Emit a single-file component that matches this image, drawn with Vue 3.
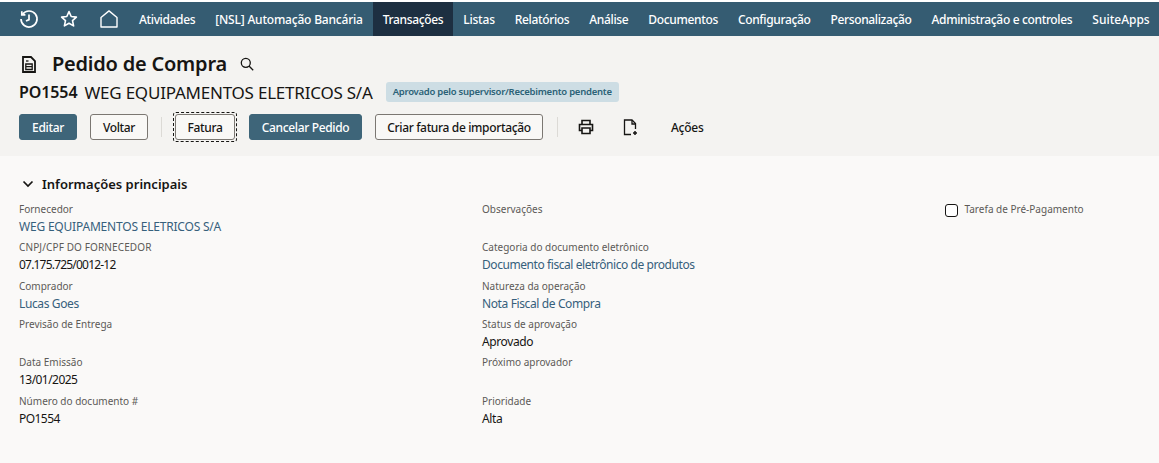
<script setup>
const nav = [
  { t: 'Atividades' }, { t: '[NSL] Automação Bancária', kind: 'loose' }, { t: 'Transações', kind: 'active' },
  { t: 'Listas', kind: 'loose' }, { t: 'Relatórios' }, { t: 'Análise' }, { t: 'Documentos' }, { t: 'Configuração' },
  { t: 'Personalização' }, { t: 'Administração e controles' }, { t: 'SuiteApps', kind: 'open' }
]
const left = [
  { l: 'Fornecedor', v: 'WEG EQUIPAMENTOS ELETRICOS S/A', kind: 'link caps' },
  { l: 'CNPJ/CPF DO FORNECEDOR', v: '07.175.725/0012-12', kind: 'num', lk: 'caps-label' },
  { l: 'Comprador', v: 'Lucas Goes', kind: 'link' },
  { l: 'Previsão de Entrega', v: '' },
  { l: 'Data Emissão', v: '13/01/2025', kind: 'num2' },
  { l: 'Número do documento #', v: 'PO1554', kind: 'num2' }
]
const mid = [
  { l: 'Observações', v: '' },
  { l: 'Categoria do documento eletrônico', v: 'Documento fiscal eletrônico de produtos', kind: 'link tight' },
  { l: 'Natureza da operação', v: 'Nota Fiscal de Compra', kind: 'link' },
  { l: 'Status de aprovação', v: 'Aprovado' },
  { l: 'Próximo aprovador', v: '' },
  { l: 'Prioridade', v: 'Alta' }
]
</script>

<template>
  <div class="page">
    <nav class="nav">
      <div class="nav-icons">
        <svg width="20" height="20" viewBox="0 0 20 20" fill="none" stroke="#fff" stroke-width="1.7"><path d="M3.6 5.2A8 8 0 1 1 2 10" /><path d="M2.800 2.200v3.600h3.600" /><path d="M10 5.500V10.600l-3 1.400" /></svg>
        <svg class="star" width="18" height="18" viewBox="0 0 18 18" fill="none" stroke="#fff" stroke-width="1.600" stroke-linejoin="round"><path d="M9 1.600l2.200 4.900 5.200.6-3.900 3.500 1.100 5.300L9 13.200l-4.600 2.700 1.100-5.300L1.600 7.100l5.200-.6z" /></svg>
        <svg class="home" width="18" height="18" viewBox="0 0 18 18" fill="none" stroke="#fff" stroke-width="1.400" stroke-linejoin="round"><path d="M1 7.500L9 .9l8 6.600V17H1z" /></svg>
      </div>
      <a v-for="n in nav" :key="n.t" class="nav-item" :class="n.kind">{{ n.t }}</a>
    </nav>

    <header class="head">
      <div class="title-row">
        <svg class="doc" width="14" height="17" viewBox="0 0 14 17" fill="none" stroke="#161513" stroke-width="1.800"><path d="M1 1h8l4 4v11H1z" /><path d="M3.800 8h6.400v5.500H3.800zM3.800 10.700h6.400" stroke-width="1.300" /><path d="M4 5h2.500" stroke-width="1.300" /></svg>
        <h1>Pedido de Compra</h1>
        <svg class="search" width="14" height="14" viewBox="0 0 14 14" fill="none" stroke="#161513" stroke-width="1.300"><circle cx="5.800" cy="5.800" r="4.500" /><path d="M9 9l4.200 4.200" /></svg>
      </div>
      <div class="sub-row">
        <strong>PO1554</strong>
        <span class="vendor">WEG EQUIPAMENTOS ELETRICOS S/A</span>
        <span class="badge">Aprovado pelo supervisor/Recebimento pendente</span>
      </div>
      <div class="actions">
        <button class="btn primary w-edit">Editar</button>
        <button class="btn w-back">Voltar</button>
        <span class="sep"></span>
        <span class="focus"><button class="btn w-inv">Fatura</button></span>
        <button class="btn primary w-cancel">Cancelar Pedido</button>
        <button class="btn w-import">Criar fatura de importação</button>
        <span class="sep sep2"></span>
        <svg class="print" width="16" height="16" viewBox="0 0 16 16" fill="none" stroke="#161513" stroke-width="1.600"><path d="M4 5V1.500h8V5" /><path d="M4 11.500H1.500V5.500h13v6H12" /><path d="M4 9h8v5.500H4z" /></svg>
        <svg class="newdoc" width="16" height="17" viewBox="0 0 16 17" fill="none" stroke="#161513" stroke-width="1.300"><path d="M8 15.500H1.500V1h7.500l3.500 3.500V10" /><path d="M9 1v4h3.500" /><path d="M12 12v4M10 14h4" stroke-width="1.500" /></svg>
        <span class="acoes">Ações</span>
      </div>
    </header>

    <main class="body">
      <div class="section">
        <svg width="12" height="8" viewBox="0 0 12 8" fill="none" stroke="#161513" stroke-width="1.700"><path d="M1.500 1.500L6 6l4.500-4.500" /></svg>
        <span>Informações principais</span>
      </div>
      <div class="grid">
        <div class="col col-a">
          <div v-for="f in left" :key="f.l" class="field">
            <div class="label" :class="f.lk">{{ f.l }}</div>
            <div class="value" :class="f.kind">{{ f.v }}</div>
          </div>
        </div>
        <div class="col col-b">
          <div v-for="f in mid" :key="f.l" class="field">
            <div class="label">{{ f.l }}</div>
            <div class="value" :class="f.kind">{{ f.v }}</div>
          </div>
        </div>
        <div class="col-c">
          <span class="check"></span>
          <span class="label">Tarefa de Pré-Pagamento</span>
        </div>
      </div>
    </main>
  </div>
</template>

<style>
html, body { margin: 0; background: #fff; }
</style>

<style scoped>
.page {
  width: 1159px;
  height: 463px;
  padding-top: 2px;
  box-sizing: border-box;
  overflow: hidden;
  display: flex;
  flex-direction: column;
  font-family: "Noto Sans", "Open Sans", sans-serif;
  color: #161513;
  background: #fff;
}
.nav {
  height: 34px;
  flex: none;
  display: flex;
  align-items: stretch;
  background: #355c72;
  padding-left: 19px;
}
.nav-icons {
  flex: none;
  display: flex;
  align-items: center;
  gap: 22px;
  width: 110px;
}
.star { margin-left: -1px; }
.nav-item {
  flex: none;
  color: #fff;
  font-size: 12px;
  font-weight: 500;
  letter-spacing: -0.35px;
  display: flex;
  align-items: center;
  padding: 0 10px;
  white-space: nowrap;
}
.nav-item.loose { letter-spacing: -0.2px; }
.nav-item.open { letter-spacing: 0; }
.nav-item.active { background: #1d2f41; }
.head {
  flex: none;
  height: 120px;
  background: #f4f3f1;
  box-sizing: border-box;
  padding: 16px 0 0 19px;
}
.title-row { display: flex; align-items: center; height: 24px; }
.doc { margin-left: 3px; }
.title-row h1 { margin: 0 0 0 16px; font-size: 20px; font-weight: 600; line-height: 24px; letter-spacing: -0.22px; }
.search { margin-left: 13px; }
.sub-row { display: flex; align-items: center; height: 24px; margin-top: 4px; }
.sub-row strong { font-size: 16px; font-weight: 600; letter-spacing: -0.1px; }
.vendor { font-size: 17px; margin-left: 7px; letter-spacing: -0.22px; }
.badge {
  margin-left: 13px;
  height: 20px;
  line-height: 20px;
  padding: 0 7px;
  background: #cddde4;
  color: #2b6277;
  border-radius: 3px;
  font-size: 9.500px;
  font-weight: 600;
  letter-spacing: -0.25px;
}
.actions { display: flex; align-items: center; height: 26px; margin-top: 10px; }
.btn {
  height: 26px;
  box-sizing: border-box;
  border: 1px solid #7b7772;
  border-radius: 3px;
  background: #f9f8f6;
  color: #161513;
  font: 500 12px "Noto Sans", sans-serif;
  letter-spacing: -0.35px;
  padding: 0;
}
.btn.primary { background: #3e6579; border-color: #3e6579; color: #fff; }
.w-edit { width: 58px; }
.w-back { width: 58px; margin-left: 13px; }
.w-inv { width: 60px; display: block; }
.w-cancel { width: 113px; margin-left: 12px; }
.w-import { width: 168px; margin-left: 13px; }
.sep { width: 1px; height: 20px; background: #dcdad6; margin-left: 13px; }
.focus { margin-left: 11px; padding: 1px; border: 1px dashed #161513; border-radius: 3px; }
.sep2 { margin-left: 14px; }
.print { margin-left: 20px; }
.newdoc { margin-left: 29px; margin-top: 1px; }
.acoes { font-size: 12px; font-weight: 500; margin-left: 32px; letter-spacing: -0.25px; }
.body { flex: 1; background: #faf9f8; padding: 19px 0 0 19px; }
.section { display: flex; align-items: center; height: 18px; font-size: 13px; font-weight: 600; }
.section svg { margin-left: 3px; margin-right: 8px; }
.grid { display: flex; margin-top: 9px; }
.col-a { width: 463px; flex: none; }
.col-b { width: 463px; flex: none; }
.field { height: 38.350px; }
.label { font-size: 10px; line-height: 14px; color: #5c5a57; }
.label.caps-label { letter-spacing: 0.12px; }
.value { font-size: 12px; line-height: 20px; color: #161513; margin-top: 1px; letter-spacing: -0.38px; }
.value.link { color: #36607c; }
.value.caps { letter-spacing: -0.2px; }
.value.tight { letter-spacing: -0.43px; }
.value.num { letter-spacing: -0.8px; }
.value.num2 { letter-spacing: -0.55px; }
.col-c { display: flex; align-items: flex-start; }
.check {
  width: 10.500px;
  height: 10.500px;
  border: 1.500px solid #161513;
  border-radius: 3px;
  background: #fff;
  margin: 2px 7px 0 0;
}
</style>
